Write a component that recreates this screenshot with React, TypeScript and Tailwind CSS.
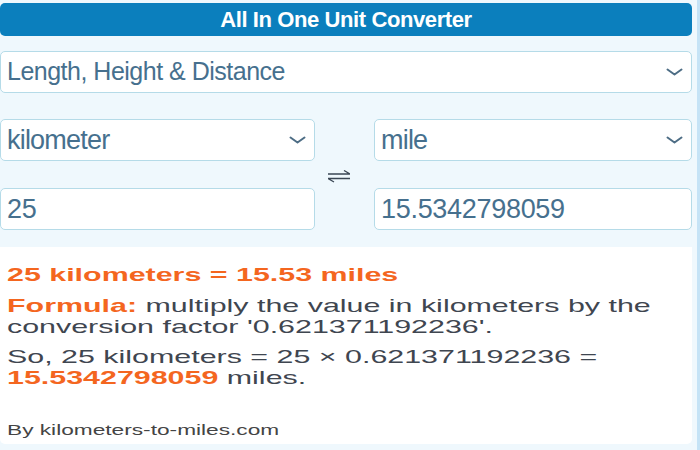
import { useState } from "react";

const categories = ["Length, Height & Distance", "Weight", "Temperature", "Volume"];
const units = ["kilometer", "mile", "meter", "foot", "inch"];

function Chevron() {
  return (
    <svg
      className="pointer-events-none absolute right-[9px] top-1/2 -translate-y-1/2"
      width="17"
      height="8"
      viewBox="0 0 17 8"
      fill="none"
    >
      <path d="M1.5 1.5 L8.5 6.5 L15.5 1.5" stroke="#4d6d85" strokeWidth="2" strokeLinecap="round" strokeLinejoin="round" />
    </svg>
  );
}

function SelectBox({ value, options, textClass }: { value: string; options: string[]; textClass: string }) {
  const [current, setCurrent] = useState(value);
  return (
    <div className="relative h-[42px]">
      <select
        value={current}
        onChange={(e) => setCurrent(e.target.value)}
        className={`h-full w-full appearance-none rounded-[5px] border border-[#b5dbe8] bg-white pl-[6px] pr-8 text-[#46708e] outline-none ${textClass}`}
      >
        {options.map((o) => (
          <option key={o} value={o}>
            {o}
          </option>
        ))}
      </select>
      <Chevron />
    </div>
  );
}

function SwapIcon() {
  return (
    <svg width="22" height="13" viewBox="0 0 22 13" fill="none">
      <path d="M0 4 H22 L16 0.5" stroke="#3a4654" strokeWidth="1.3" />
      <path d="M22 8.5 H0 L6 12" stroke="#3a4654" strokeWidth="1.3" />
    </svg>
  );
}

export default function App() {
  const value = 25;
  const factor = 0.621371192236;
  const result = (value * factor).toFixed(10);

  return (
    <div className="flex h-[450px] w-[700px] flex-col overflow-hidden border-r-[3px] border-[#c5e3f6] bg-[#eff8fd] pr-[5px] font-['Liberation_Sans',Arial,sans-serif]">
      {/* Header */}
      <div className="mt-[3px] flex h-[33px] items-center justify-center rounded-[5px] bg-[#0b7fbd]">
        <h1 className="text-[22px] font-bold tracking-[-0.4px] text-white">All In One Unit Converter</h1>
      </div>

      {/* Category */}
      <div className="mt-[15px]">
        <SelectBox value={categories[0]} options={categories} textClass="text-[25px] tracking-[-0.5px]" />
      </div>

      {/* Units */}
      <div className="mt-[26px] grid grid-cols-[315px_59px_1fr] grid-rows-[42px_42px] gap-y-[27px]">
        <SelectBox value="kilometer" options={units} textClass="text-[27px] tracking-[-0.8px]" />
        <div className="row-span-2 flex items-center justify-center pr-[12px] pt-[4px]">
          <SwapIcon />
        </div>
        <SelectBox value="mile" options={units} textClass="text-[27px] tracking-[-0.8px]" />
        <input
          defaultValue={value}
          className="h-[42px] w-full rounded-[5px] border border-[#b5dbe8] bg-white pl-[6px] text-[27px] tracking-[-0.3px] text-[#46708e] outline-none"
        />
        <input
          defaultValue={result}
          readOnly
          className="h-[42px] w-full rounded-[5px] border border-[#b5dbe8] bg-white pl-[6px] text-[27px] tracking-[-0.3px] text-[#46708e] outline-none"
        />
      </div>

      {/* Result */}
      <div className="mt-[17px] h-[197px] rounded-b-[5px] bg-white pl-[7px] pt-[17px] text-[#3f4650]">
        <p className="origin-left scale-x-[1.6] whitespace-nowrap text-[19px] font-bold leading-[21px] text-[#f4661f]">
          {value} kilometers = 15.53 miles
        </p>
        <p className="mt-[10px] origin-left scale-x-[1.6] whitespace-nowrap text-[19px] leading-[21px]">
          <span className="font-bold text-[#f4661f]">Formula:</span> multiply the value in kilometers by the
          <br />
          conversion factor '{factor}'.
        </p>
        <p className="mt-[9px] origin-left scale-x-[1.6] whitespace-nowrap text-[19px] leading-[21px]">
          So, {value} kilometers = {value} × {factor} =
          <br />
          <span className="font-bold text-[#f4661f]">{result}</span> miles.
        </p>
        <p className="mt-[33px] origin-left scale-x-[1.62] whitespace-nowrap text-[14px] leading-[18px] text-[#444]">
          By kilometers-to-miles.com
        </p>
      </div>
    </div>
  );
}
